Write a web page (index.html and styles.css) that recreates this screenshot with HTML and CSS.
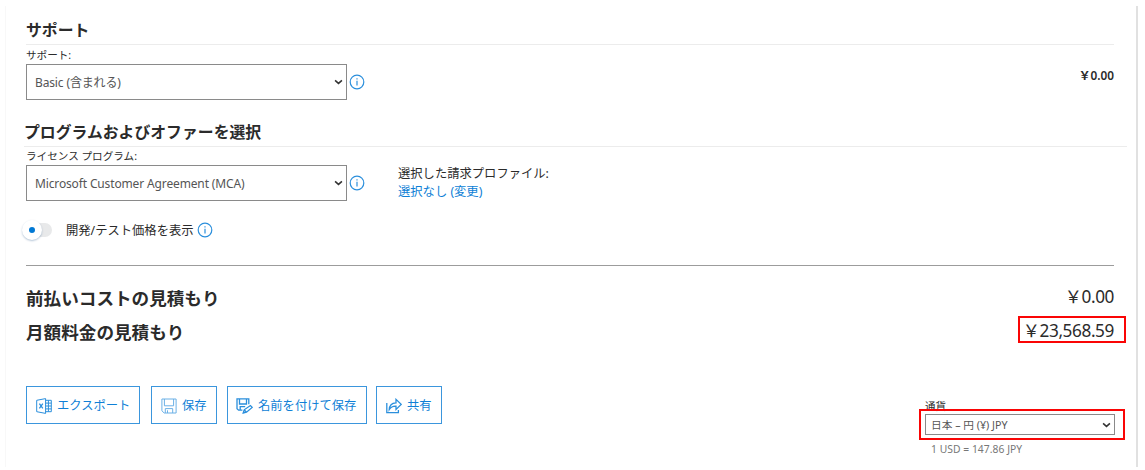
FILE: index.html
```html
<!DOCTYPE html>
<html lang="ja">
<head>
  <meta charset="UTF-8" />
  <meta name="viewport" content="width=device-width, initial-scale=1" />
  <title>料金計算ツール</title>
  <link rel="stylesheet" href="styles.css">
</head>
<body>

  <div class="panel">
    <section class="support">
      <h2 class="title">サポート</h2>
      <div class="row">
        <div class="field">
          <label class="label" for="support">サポート:</label>
          <div class="field-line">
            <div class="select-box">
              <select id="support"><option>Basic (含まれる)</option></select>
              <svg class="chevron" viewBox="0 0 10 6"><path d="M1.2 1.2 5 4.6 8.8 1.2" /></svg>
            </div>
            <svg class="info" viewBox="0 0 16 16"><circle cx="8" cy="8" r="6.8" /><path d="M8 6.8v4.8M8 4.2v1.3" /></svg>
          </div>
        </div>
        <span class="support-price">￥0.00</span>
      </div>
    </section>

    <section class="program">
      <h2 class="title program-title">プログラムおよびオファーを選択</h2>
      <div class="row">
        <div class="field">
          <label class="label program-label" for="program">ライセンス プログラム:</label>
          <div class="field-line">
            <div class="select-box">
              <select id="program"><option>Microsoft Customer Agreement (MCA)</option></select>
              <svg class="chevron" viewBox="0 0 10 6"><path d="M1.2 1.2 5 4.6 8.8 1.2" /></svg>
            </div>
            <svg class="info" viewBox="0 0 16 16"><circle cx="8" cy="8" r="6.8" /><path d="M8 6.8v4.8M8 4.2v1.3" /></svg>
          </div>
        </div>
        <div class="profile">
          <div>選択した請求プロファイル:</div>
          <a class="link">選択なし (変更)</a>
        </div>
      </div>
      <div class="toggle-row">
        <span class="toggle"><span class="knob"></span></span>
        <span class="toggle-text">開発/テスト価格を表示</span>
        <svg class="info" viewBox="0 0 16 16"><circle cx="8" cy="8" r="6.8" /><path d="M8 6.8v4.8M8 4.2v1.3" /></svg>
      </div>
    </section>

    <section class="totals">
      <div class="total">
        <h3>前払いコストの見積もり</h3>
        <span class="amount">￥0.00</span>
      </div>
      <div class="total">
        <h3>月額料金の見積もり</h3>
        <span class="amount marked">￥23,568.59</span>
      </div>
    </section>

    <section class="footer">
      <div class="buttons">
        <button class="btn export">
          <svg class="icon" viewBox="0 0 16 16"><path d="M.7 2.3 9.6.6v14.8L.7 13.7zM9.6 2.3h5.7v11.4H9.6M9.6 5.1h5.7M9.6 8h5.7M9.6 10.9h5.7M12.4 2.3v11.4" /><path class="thick" d="m3.4 5.7 3.4 4.7M6.8 5.7l-3.4 4.7" /></svg>
          エクスポート
        </button>
        <button class="btn save">
          <svg class="icon light" viewBox="0 0 16 16"><path d="M.9 1h14.2v14H3.2L.9 12.8zM3.4 1v6.8h9.2V1M4.3 15v-4.4h7.4V15M6.5 12.3V15" /></svg>
          保存
        </button>
        <button class="btn save-as">
          <svg class="icon wide" viewBox="0 0 17 16"><path class="thick" d="M12.8 6.3V.9H1v9.8l1.6 1.5h3.8M3.5 1v5h7V1M4.2 12V8.7h5" /><path class="thick" d="m7.2 15 1-3.2 6.2-4.3 1.8 1.9-5.7 4.8zM8.4 12l1.8 2" /></svg>
          名前を付けて保存
        </button>
        <button class="btn share">
          <svg class="icon" viewBox="0 0 16 16"><path class="thick" d="M.8 5v9.7h11.6V12M3.2 11.7C3.4 7.4 6 5 10 4.8V1.4l5.2 5-5.2 5V8.2C7 8 4.8 9.2 3.2 11.7z" /></svg>
          共有
        </button>
      </div>
      <div class="currency">
        <label class="currency-label" for="currency">通貨</label>
        <div class="select-box small">
          <select id="currency"><option>日本 – 円 (¥) JPY</option></select>
          <svg class="chevron" viewBox="0 0 10 6"><path d="M1.2 1.2 5 4.6 8.8 1.2" /></svg>
          <span class="outline"></span>
        </div>
        <div class="rate">1 USD = 147.86 JPY</div>
      </div>
    </section>
  </div>

</body>
</html>
```
FILE: styles.css
```css
* {
  box-sizing: border-box;
}

body {
  margin: 0;
  padding: 6px 7px 0 5px;
  font-family: "Noto Sans", "Noto Sans CJK JP", sans-serif;
  font-size: 12.3px;
  color: #2b2b2b;
  background: #fff;
}

.panel {
  height: 461px;
  padding: 15px 22px 0 20px;
  border-left: 1px solid #f8f8f8;
  border-right: 2px solid #e1e1e1;
}

h2, h3 {
  margin: 0;
  font-weight: 700;
  white-space: nowrap;
}

.title {
  height: 24px;
  font-size: 15.85px;
  line-height: 18px;
  border-bottom: 1px solid #ececec;
}

.row {
  display: flex;
}

.label {
  display: block;
  height: 19px;
  font-size: 10.6px;
  line-height: 20px;
}

.program-label {
  height: 18px;
  line-height: 18px;
}

.field-line {
  display: flex;
  align-items: center;
  gap: 2px;
}

.select-box {
  position: relative;
  width: 321px;
  height: 36px;
}

select {
  appearance: none;
  display: block;
  width: 100%;
  height: 100%;
  padding: 0 8px;
  border: 1.5px solid #8a8a8a;
  border-radius: 0;
  background: #fff;
  color: #555;
  font: inherit;
  font-size: 12px;
  letter-spacing: -0.14px;
}

.chevron {
  position: absolute;
  top: 15px;
  right: 4px;
  width: 9px;
  height: 6px;
  fill: none;
  stroke: #333;
  stroke-width: 1.7;
}

.info {
  width: 16px;
  height: 16px;
  fill: none;
  stroke: #2b8fdc;
  stroke-width: 1.2;
}

.support {
  height: 102px;
}

.support-price {
  margin: 21px 0 0 auto;
  font-size: 11.8px;
  font-weight: 600;
  line-height: 18px;
}

.program-title {
  margin: 0 -13px 0 -2px;
}

.profile {
  margin: 18px 0 0 33px;
  line-height: 18px;
}

.link {
  color: #0f7fd6;
}

.toggle-row {
  display: flex;
  align-items: center;
  height: 20px;
  margin-top: 19px;
}

.toggle {
  position: relative;
  width: 26px;
  height: 14px;
  border-radius: 7px;
  background: #e8e9ea;
}

.knob {
  position: absolute;
  top: -3px;
  left: -4px;
  width: 20px;
  height: 20px;
  border: 7px solid #fff;
  border-radius: 50%;
  background: #0078d4;
  box-shadow: 0 1px 2px rgba(0, 60, 120, 0.3);
}

.toggle-text {
  margin: 0 3px 0 14px;
}

.totals {
  margin-top: 25px;
  padding-top: 15px;
  border-top: 1px solid #9c9c9c;
}

.total {
  display: flex;
  align-items: center;
  justify-content: space-between;
  height: 34px;
}

h3 {
  font-size: 17.6px;
  line-height: 34px;
}

.amount {
  margin-top: -2px;
  font-size: 17.2px;
  line-height: 20px;
  letter-spacing: -0.4px;
}

.marked {
  margin: -5px -12px 0 0;
  padding: 3px 10px 0 3px;
  height: 27px;
  border: 2px solid #fa0505;
}

.footer {
  display: flex;
  justify-content: space-between;
  margin-top: 37px;
}

.buttons {
  display: flex;
}

.btn {
  display: flex;
  align-items: center;
  gap: 5px;
  height: 38px;
  padding: 0 0 0 9px;
  border: 1.5px solid #3b96dd;
  background: #fff;
  color: #0f7fd6;
  font: inherit;
  white-space: nowrap;
}

.export {
  width: 114px;
  margin-right: 11px;
}

.save {
  width: 66px;
  margin-right: 10px;
}

.save-as {
  width: 140px;
  padding-left: 8px;
  margin-right: 9px;
}

.share {
  width: 66px;
  padding-left: 9px;
}

.icon {
  flex: none;
  width: 16px;
  height: 16px;
  margin-top: 2px;
  fill: none;
  stroke: #2b8fdc;
  stroke-width: 1;
}

.icon.wide {
  width: 17px;
}

.light {
  stroke: #6bb0e6;
}

.thick {
  stroke-width: 1.3;
}

.currency {
  width: 190px;
  margin-right: -1px;
  padding-top: 12px;
}

.currency-label {
  display: block;
  height: 16px;
  font-size: 10.5px;
  line-height: 16px;
}

.small {
  width: 190px;
  height: 21px;
}

.small select {
  padding: 0 5px;
  font-size: 10.7px;
  letter-spacing: 0;
}

.small .chevron {
  top: 8px;
}

.outline {
  position: absolute;
  inset: -5px -10px -5px -6px;
  border: 2px solid #fa0505;
  pointer-events: none;
}

.rate {
  padding-left: 6px;
  margin-top: 6px;
  font-size: 10.3px;
  line-height: 16px;
  letter-spacing: 0.05px;
  color: #777;
}
```
